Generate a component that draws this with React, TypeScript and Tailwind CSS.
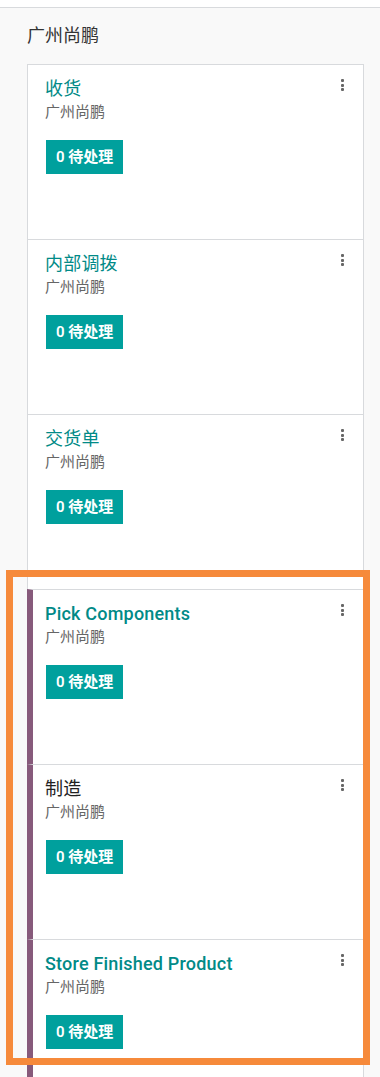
const FONT = { fontFamily: 'Roboto, "Noto Sans CJK SC", sans-serif' };

type PickingType = {
  name: string;
  warehouse: string;
  count: number;
  action?: boolean;
  flagged?: boolean;
  latin?: boolean;
};

const types: PickingType[] = [
  { name: '收货', warehouse: '广州尚鹏', count: 0, action: true },
  { name: '内部调拨', warehouse: '广州尚鹏', count: 0, action: true },
  { name: '交货单', warehouse: '广州尚鹏', count: 0, action: true },
  { name: 'Pick Components', warehouse: '广州尚鹏', count: 0, action: true, flagged: true, latin: true },
  { name: '制造', warehouse: '广州尚鹏', count: 0, flagged: true },
  { name: 'Store Finished Product', warehouse: '广州尚鹏', count: 0, action: true, flagged: true, latin: true },
];

function Kebab() {
  return (
    <button className="absolute top-[14px] right-[19px] flex flex-col gap-[1.5px] p-0">
      <span className="w-[3px] h-[3px] rounded-[1px] bg-[#666]" />
      <span className="w-[3px] h-[3px] rounded-[1px] bg-[#666]" />
      <span className="w-[3px] h-[3px] rounded-[1px] bg-[#666]" />
    </button>
  );
}

function Card({ item }: { item: PickingType }) {
  const titleColor = item.action ? 'text-[#018a87]' : 'text-[#222]';
  return (
    <div
      className={
        item.flagged
          ? 'relative h-[175px] shrink-0 border-t border-[#d8dadd] border-l-[6px] border-l-[#875a7b] pl-[12px] pt-[10px]'
          : 'relative h-[175px] shrink-0 border-t border-[#d8dadd] border-l border-l-[#d8dadd] pl-[17px] pt-[10px]'
      }
    >
      <div
        className={`text-[18px] leading-[27px] tracking-[0.2px] ${titleColor} ${
          item.latin ? 'font-medium' : 'font-normal'
        }`}
      >
        {item.name}
      </div>
      <div className="text-[15px] leading-[20px] text-[#666]">{item.warehouse}</div>
      <button className="mt-[18px] ml-px h-[34px] px-[10px] bg-[#00a09d] text-white text-[15px] font-semibold">
        {item.count} 待处理
      </button>
      <Kebab />
    </div>
  );
}

export default function App() {
  return (
    <div className="relative w-[380px] h-[1077px] overflow-hidden bg-white" style={FONT}>
      <div className="mt-[7px] h-full border-t border-[#d8dadd] bg-[#f9f9f9] pl-[27px] pr-[16px]">
        {/* Warehouse header */}
        <div className="pt-[16px] pb-[16px] text-[18px] leading-[24px] text-[#333]">广州尚鹏</div>

        {/* Operation type cards */}
        <div className="flex flex-col bg-white border-r border-[#d8dadd]">
          {types.map((t) => (
            <Card key={t.name} item={t} />
          ))}
        </div>
      </div>

      {/* Highlight annotation */}
      <div className="absolute left-[6px] top-[570px] w-[364px] h-[495px] border-[7px] border-[#f68a3b] pointer-events-none" />
    </div>
  );
}
